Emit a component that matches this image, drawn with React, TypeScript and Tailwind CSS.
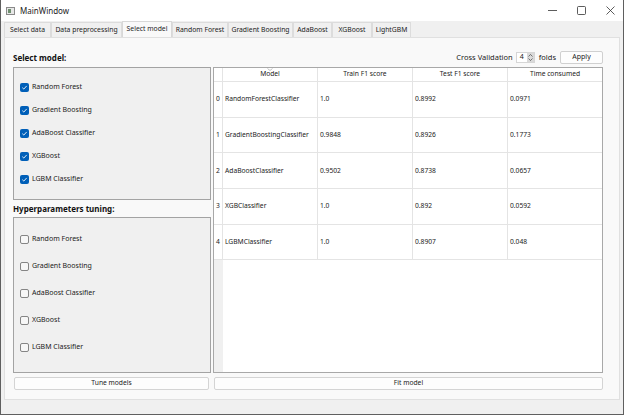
import React from "react";

const tabs: [string, string][] = [
  ["Select data", "w-[47px]"],
  ["Data preprocessing", "w-[71px]"],
  ["Select model", "w-[50px]"],
  ["Random Forest", "w-[56px]"],
  ["Gradient Boosting", "w-[65px]"],
  ["AdaBoost", "w-[39px]"],
  ["XGBoost", "w-[40px]"],
  ["LightGBM", "w-[39px]"],
];

const models = ["Random Forest", "Gradient Boosting", "AdaBoost Classifier", "XGBoost", "LGBM Classifier"];

const rows = [
  ["RandomForestClassifier", "1.0", "0.8992", "0.0971"],
  ["GradientBoostingClassifier", "0.9848", "0.8926", "0.1773"],
  ["AdaBoostClassifier", "0.9502", "0.8738", "0.0657"],
  ["XGBClassifier", "1.0", "0.892", "0.0592"],
  ["LGBMClassifier", "1.0", "0.8907", "0.048"],
];

const Check = ({ checked }: { checked: boolean }) =>
  checked ? (
    <span className="flex h-[9px] w-[9px] items-center justify-center rounded-[2px] bg-[#005fb8]">
      <svg width="7" height="7" viewBox="0 0 8 8">
        <path d="M1.5 4.2 3.2 5.8 6.5 2.2" fill="none" stroke="white" strokeWidth="1" />
      </svg>
    </span>
  ) : (
    <span className="h-[9px] w-[9px] rounded-[2px] border border-[#858585] bg-[#f7f7f7]" />
  );

const CheckGroup = ({ checked, className, rowClass }: { checked: boolean; className: string; rowClass: string }) => (
  <div className={`flex flex-col border border-[#a3a3a3] bg-[#f0f0f0] px-[6px] ${className}`}>
    {models.map((m) => (
      <label key={m} className={`flex items-center gap-[3px] text-[7px] text-[#1a1a1a] ${rowClass}`}>
        <Check checked={checked} />
        {m}
      </label>
    ))}
  </div>
);

export default function App() {
  return (
    <div
      className="flex h-[415px] w-[624px] flex-col border-x border-b border-[#5f5f5f] bg-[#f0f0f0] text-black"
      style={{ fontFamily: '"Noto Sans", "Open Sans", sans-serif' }}
    >
      {/* title bar */}
      <div className="flex h-[21px] shrink-0 items-center bg-white">
        <span className="ml-[5px] flex h-[8px] w-[9px] items-start border border-[#8a8a8a] bg-[#e8e8e8]">
          <span className="ml-[1px] mt-[1px] h-[4px] w-[3px] bg-[#6f8f6f]" />
        </span>
        <span className="ml-[5px] text-[8px] text-[#222]">MainWindow</span>
        <div className="ml-auto flex items-center gap-[20px] pr-[8px]">
          <svg width="9" height="9" viewBox="0 0 9 9">
            <path d="M0 4.5H9" stroke="#333" strokeWidth="0.8" />
          </svg>
          <svg width="9" height="9" viewBox="0 0 9 9">
            <rect x="0.5" y="0.5" width="8" height="8" rx="1" fill="none" stroke="#333" strokeWidth="0.8" />
          </svg>
          <svg width="9" height="9" viewBox="0 0 9 9">
            <path d="M0.5 0.5 8.5 8.5M8.5 0.5 0.5 8.5" stroke="#333" strokeWidth="0.8" />
          </svg>
        </div>
      </div>

      {/* tabs */}
      <div className="flex h-[16px] shrink-0 items-end px-[3px]">
        {tabs.map(([t, w]) => {
          const active = t === "Select model";
          return (
            <div
              key={t}
              className={`flex items-center justify-center border border-b-0 text-[6.8px] text-[#222] ${w} ${
                active
                  ? "h-[16px] border-[#d8d8d8] bg-[#f9f9f9]"
                  : "h-[15px] border-[#dcdcdc] bg-[#f0f0f0]"
              }`}
            >
              {t}
            </div>
          );
        })}
      </div>

      {/* pane */}
      <div className="mx-[3px] flex h-[363px] shrink-0 flex-col border border-[#e0e0e0] bg-[#f9f9f9] pl-[8px] pr-[16px] pt-[12px]">
        <div className="flex h-[15px] items-center">
          <span className="text-[8px] font-bold text-[#111]">Select model:</span>
          <div className="ml-auto flex items-center text-[7.5px] text-[#222]">
            <span>Cross Validation</span>
            <span className="ml-[3px] flex h-[11px] w-[19px] items-center justify-between border border-[#d6d6d6] bg-white pl-[3px]">
              <span className="text-[7px]">4</span>
              <span className="flex h-[9px] w-[7px] flex-col items-center justify-center gap-[1px] bg-[#d9d9d9]">
                <svg width="5" height="3" viewBox="0 0 5 3">
                  <path d="M0.5 2.5 2.5 0.5 4.5 2.5" fill="none" stroke="#444" strokeWidth="0.7" />
                </svg>
                <svg width="5" height="3" viewBox="0 0 5 3">
                  <path d="M0.5 0.5 2.5 2.5 4.5 0.5" fill="none" stroke="#444" strokeWidth="0.7" />
                </svg>
              </span>
            </span>
            <span className="ml-[4px]">folds</span>
            <button className="ml-[4px] flex h-[13px] w-[43px] items-center justify-center rounded-[2px] border border-[#d0d0d0] bg-[#fdfdfd] text-[7px] text-[#222]">
              Apply
            </button>
          </div>
        </div>

        <div className="mt-[2px] flex h-[306px] gap-[2px]">
          {/* left column */}
          <div className="flex w-[198px] flex-col">
            <CheckGroup checked className="h-[133px] pt-[8px]" rowClass="h-[23px]" />
            <div className="flex h-[17px] items-center text-[8px] font-bold text-[#111]">Hyperparameters tuning:</div>
            <CheckGroup checked={false} className="h-[156px] pt-[8px]" rowClass="h-[27px]" />
          </div>

          {/* table */}
          <div className="flex flex-1 flex-col border border-[#a8a8a8] bg-white text-[6.7px] text-[#222]">
            <div className="flex h-[14px] shrink-0 border-b border-[#e4e4e4]">
              <div className="w-[9px] shrink-0 border-r border-[#e4e4e4]" />
              {["Model", "Train F1 score", "Test F1 score", "Time consumed"].map((h, i) => (
                <div
                  key={h}
                  className="relative flex flex-1 items-center justify-center border-r border-[#e4e4e4] last:border-r-0"
                >
                  {i === 0 && (
                    <svg className="absolute left-1/2 top-0 -translate-x-1/2" width="6" height="3" viewBox="0 0 6 3">
                      <path d="M0.5 0.5 3 2.5 5.5 0.5" fill="none" stroke="#999" strokeWidth="0.6" />
                    </svg>
                  )}
                  {h}
                </div>
              ))}
            </div>
            {rows.map((r, i) => (
              <div key={i} className="flex h-[35.7px] shrink-0 border-b border-[#e4e4e4]">
                <div className="flex w-[9px] shrink-0 items-center justify-center border-r border-[#e4e4e4]">
                  {i}
                </div>
                {r.map((c, j) => (
                  <div key={j} className="flex flex-1 items-center border-r border-[#e4e4e4] pl-[2px] last:border-r-0">
                    {c}
                  </div>
                ))}
              </div>
            ))}
            <div className="flex flex-1">
              <div className="w-[9px] shrink-0 bg-[#f0f0f0]" />
            </div>
          </div>
        </div>

        <div className="mt-[4px] flex gap-[5px] pl-[1px]">
          <button className="flex h-[13px] w-[195px] items-center justify-center rounded-[2px] border border-[#d4d4d4] bg-[#fdfdfd] text-[6.7px] text-[#222]">
            Tune models
          </button>
          <button className="flex h-[13px] flex-1 items-center justify-center rounded-[2px] border border-[#d4d4d4] bg-[#fdfdfd] text-[6.7px] text-[#222]">
            Fit model
          </button>
        </div>
      </div>
    </div>
  );
}
